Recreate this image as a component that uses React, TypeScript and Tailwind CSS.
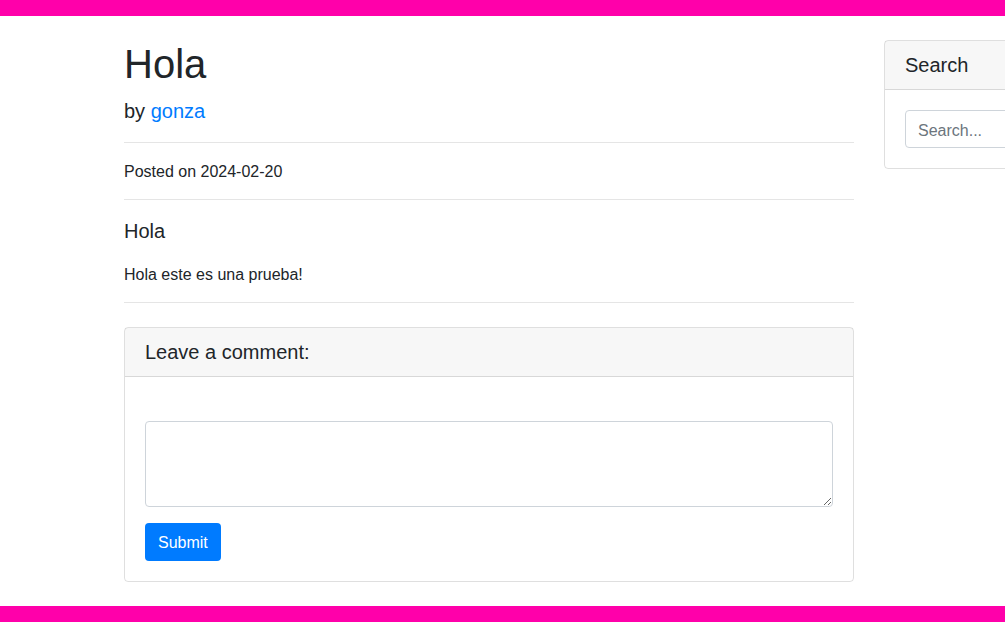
import React from 'react';

export default function App() {
  return (
    <div className="w-[1005px] h-[622px] overflow-hidden bg-white text-[#212529] text-[16px] leading-[24px] font-['Liberation_Sans',Arial,sans-serif]">
      {/* Top bar */}
      <div className="h-4 bg-[#ff00aa]" />

      <div className="ml-[109px] w-[1140px] flex">
        {/* Post column */}
        <div className="w-[760px] px-[15px] shrink-0">
          <h1 className="mt-6 mb-2 text-[40px] leading-[48px] font-normal">Hola</h1>
          <p className="mb-4 text-[20px] leading-[30px]">
            by <a href="#" className="text-[#007bff]">gonza</a>
          </p>
          <hr className="my-4 border-t border-black/10" />
          <p className="pt-px -mb-px">Posted on 2024-02-20</p>
          <hr className="my-4 border-t border-black/10" />
          <p className="mb-4 text-[20px] leading-[30px]">Hola</p>
          <p className="pt-px -mb-px">Hola este es una prueba!</p>
          <hr className="my-4 border-t border-black/10" />

          {/* Comment card */}
          <div className="my-6 border border-black/[0.125] rounded">
            <div className="px-5 py-3 bg-black/[0.03] border-b border-black/[0.125]">
              <h5 className="text-[20px] leading-[24px] font-normal">Leave a comment:</h5>
            </div>
            <div className="p-5">
              <form className="pt-6" onSubmit={(e) => e.preventDefault()}>
                <div className="mb-4">
                  <textarea
                    rows={3}
                    className="block w-full h-[86px] px-3 py-[6px] border border-[#ced4da] rounded text-[16px] leading-[24px] resize-y"
                  />
                </div>
                <button
                  type="submit"
                  className="h-[38px] px-[13px] pt-px bg-[#007bff] text-white rounded text-[16px] leading-[24px]"
                >
                  Submit
                </button>
              </form>
            </div>
          </div>
        </div>

        {/* Sidebar */}
        <div className="w-[380px] px-[15px] shrink-0">
          <div className="my-6 border border-black/[0.125] rounded">
            <div className="px-5 py-3 bg-black/[0.03] border-b border-black/[0.125]">
              <h5 className="text-[20px] leading-[24px] font-normal">Search</h5>
            </div>
            <div className="p-5">
              <input
                type="text"
                placeholder="Search..."
                className="block w-full h-[38px] px-3 pt-[3px] border border-[#ced4da] rounded text-[16px] placeholder:text-[#6c757d]"
              />
            </div>
          </div>
        </div>
      </div>

      {/* Bottom bar */}
      <div className="h-4 bg-[#ff00aa]" />
    </div>
  );
}
